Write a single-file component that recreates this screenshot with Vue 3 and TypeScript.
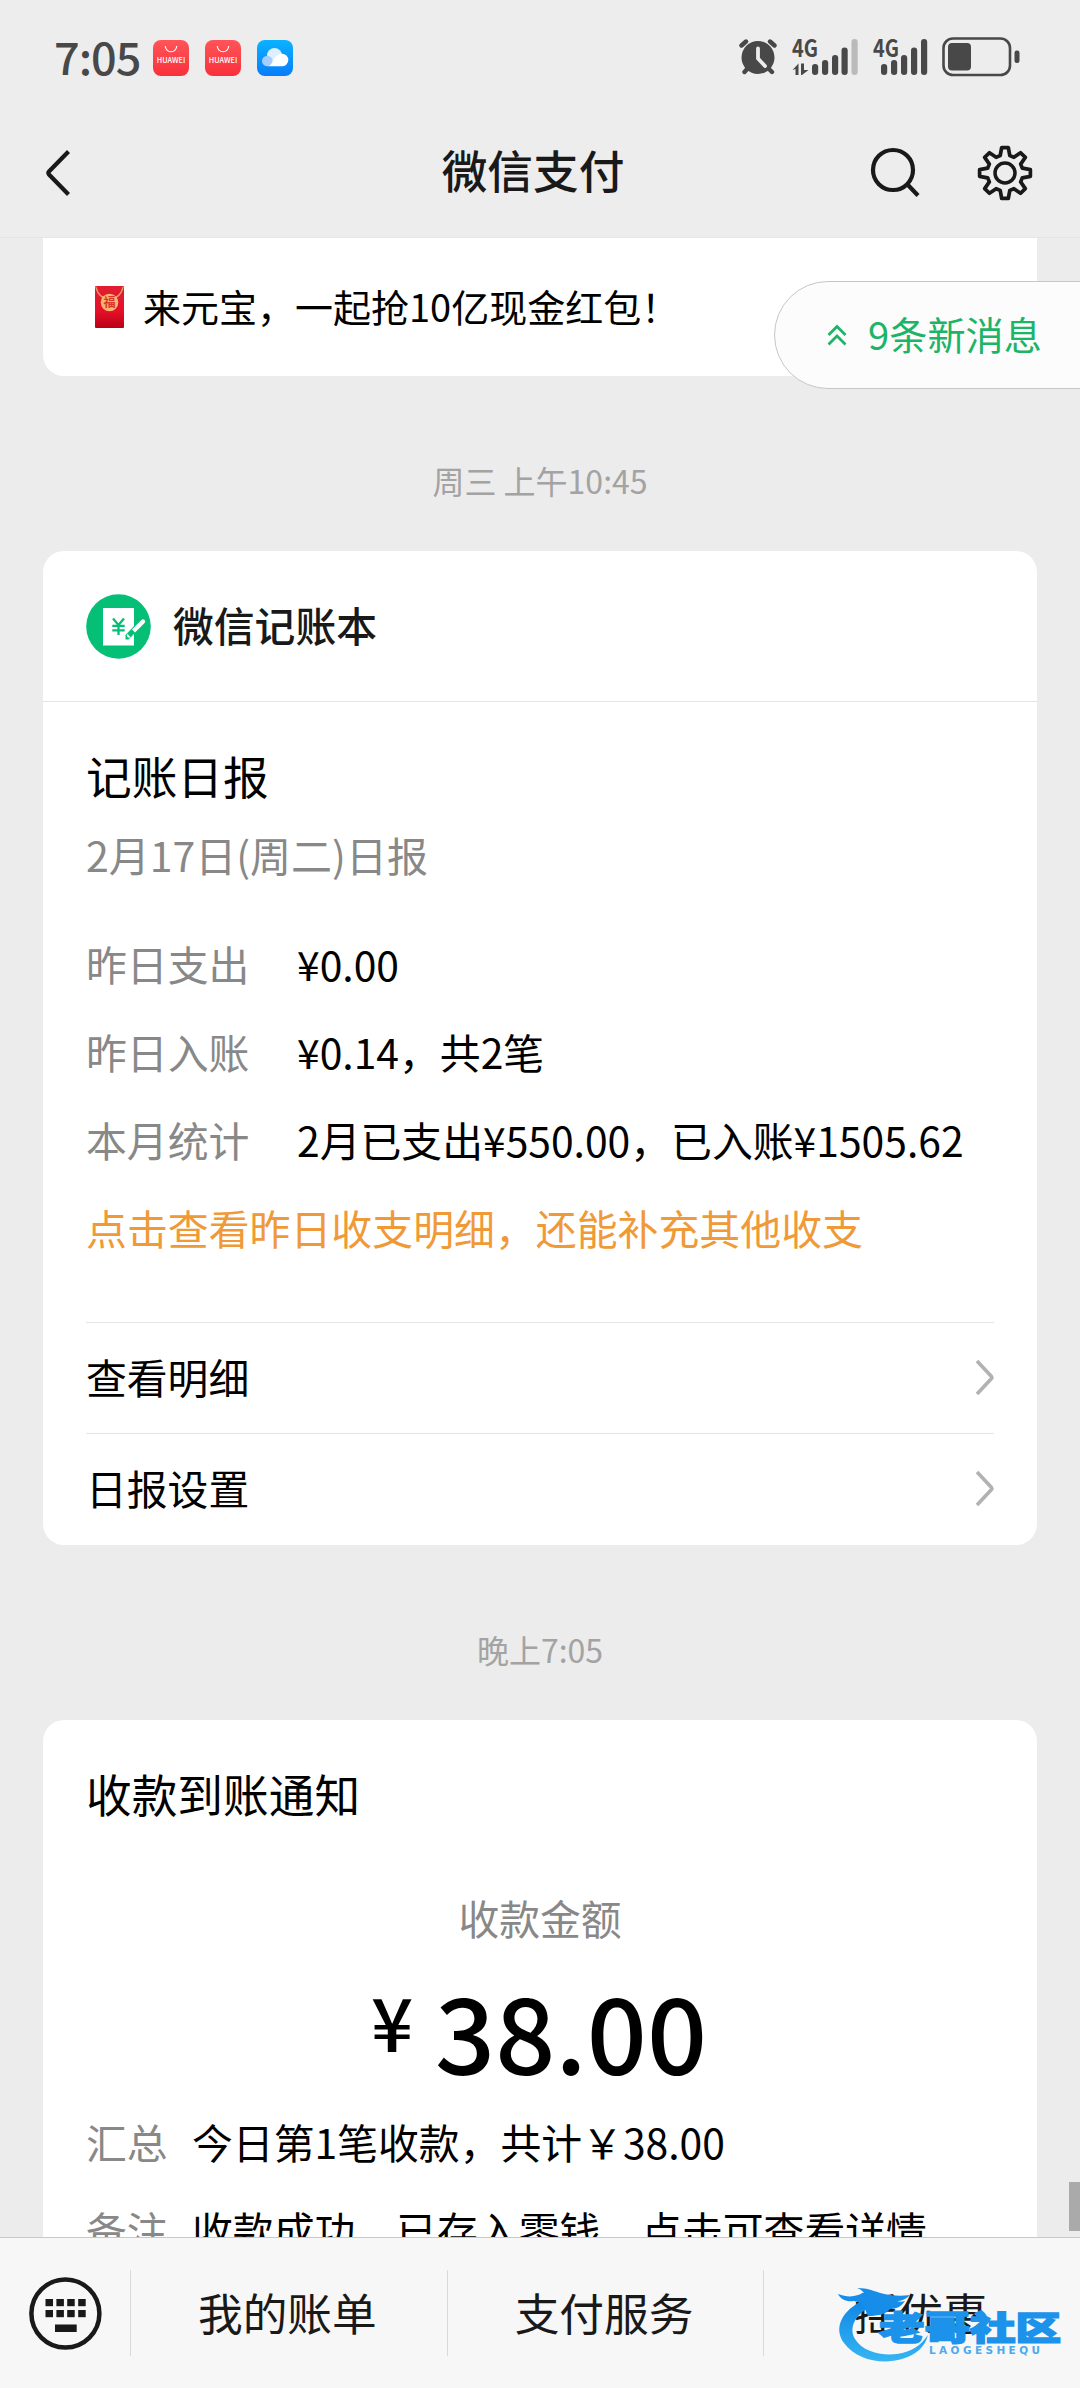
<script setup lang="ts">
interface SignalBar { x: number; top: number; dim?: boolean }
interface InfoRow { label: string; value: string }

const notifications = ['store', 'store', 'cloud']

const simOne: SignalBar[] = [
  { x: 20, top: 26 },
  { x: 30, top: 22 },
  { x: 40, top: 17 },
  { x: 49.5, top: 9.5 },
  { x: 59.5, top: 1, dim: true },
]
const simTwo: SignalBar[] = [
  { x: 8, top: 26 },
  { x: 18, top: 22 },
  { x: 28, top: 17 },
  { x: 38, top: 9.5 },
  { x: 48, top: 1 },
]

const reportRows: InfoRow[] = [
  { label: '昨日支出', value: '¥0.00' },
  { label: '昨日入账', value: '¥0.14，共2笔' },
  { label: '本月统计', value: '2月已支出¥550.00，已入账¥1505.62' },
]
const reportLinks = ['查看明细', '日报设置']

const receiptRows: InfoRow[] = [
  { label: '汇总', value: '今日第1笔收款，共计￥38.00' },
  { label: '备注', value: '收款成功，已存入零钱，点击可查看详情' },
]

const menus = ['我的账单', '支付服务', '摇优惠']
const keyColumns = [45.5, 56.4, 67.2, 78.2]

// Outline of the eight-toothed settings cog, centred on the origin.
const cog = (() => {
  const points: string[] = []
  for (let i = 0; i < 8; i++) {
    const base = i * 45
    const corners: [number, number][] = [[-15.5, 18], [-7.5, 25.6], [7.5, 25.6], [15.5, 18]]
    for (const [offset, radius] of corners) {
      const a = ((base + offset) * Math.PI) / 180
      points.push(`${(radius * Math.sin(a)).toFixed(2)},${(-radius * Math.cos(a)).toFixed(2)}`)
    }
  }
  return points.join(' ')
})()
</script>

<template>
  <div class="screen">
    <header class="top">
      <div class="status">
        <div class="status-left">
          <span class="clock">7:05</span>
          <template v-for="(kind, i) in notifications" :key="i">
            <svg v-if="kind === 'store'" class="app-icon" viewBox="0 0 36 36">
              <defs>
                <linearGradient id="store" x1="0" y1="0" x2="0" y2="1">
                  <stop offset="0" stop-color="#ff5558" />
                  <stop offset="1" stop-color="#f8303c" />
                </linearGradient>
              </defs>
              <rect width="36" height="36" rx="8" fill="url(#store)" />
              <path d="M12.3 6a5.7 5.7 0 0 0 11.4 0" fill="none" stroke="#fff" stroke-width="1.1" />
              <text x="18" y="23" font-size="7" font-weight="500" text-anchor="middle" textLength="28.5" lengthAdjust="spacingAndGlyphs" fill="#fff" class="brand">HUAWEI</text>
            </svg>
            <svg v-else class="app-icon" viewBox="0 0 36 36">
              <defs>
                <linearGradient id="sky" x1="0" y1="0" x2="0" y2="1">
                  <stop offset="0" stop-color="#0bb2ff" />
                  <stop offset="1" stop-color="#087cfb" />
                </linearGradient>
              </defs>
              <rect width="36" height="36" rx="8" fill="url(#sky)" />
              <circle cx="17.5" cy="15.5" r="7.5" fill="#dcf0ff" />
              <circle cx="10.3" cy="21" r="5.3" fill="#a6cdfb" />
              <path d="M10 26.3C17 26 16 13.500 25 13.700a6.300 6.300 0 0 1 0 12.600Z" fill="#fff" />
            </svg>
          </template>
        </div>
        <div class="status-right">
          <svg class="alarm" viewBox="0 0 38 38">
            <g stroke="#484848" stroke-width="4.400" stroke-linecap="round">
              <path d="M2.500 7.500 7 3.500M31 3.500l4.500 4M9 30l-3.500 4M29 30l4 4" />
            </g>
            <circle cx="19" cy="19.500" r="16.500" fill="#484848" />
            <path d="M19 10.500v10l7 7.500" fill="none" stroke="#ececec" stroke-width="3.800" stroke-linecap="round" stroke-linejoin="round" />
          </svg>
          <svg class="sim" width="67" height="38" viewBox="0 0 67 38">
            <text x="0" y="19" font-size="24" font-weight="700" textLength="26" lengthAdjust="spacingAndGlyphs" fill="#484848" class="brand">4G</text>
            <path d="M0.500 32 6.500 25.500V37H3.500V31ZM9 25.500h3V32h4.500L10 37H9Z" fill="#484848" />
            <rect v-for="b in simOne" :key="b.x" :x="b.x" :y="b.top" width="6.200" :height="37 - b.top" rx="3" :fill="b.dim ? '#bababa' : '#484848'" />
          </svg>
          <svg class="sim" width="55" height="38" viewBox="0 0 55 38">
            <text x="0" y="19" font-size="24" font-weight="700" textLength="26" lengthAdjust="spacingAndGlyphs" fill="#484848" class="brand">4G</text>
            <rect v-for="b in simTwo" :key="b.x" :x="b.x" :y="b.top" width="6.200" :height="37 - b.top" rx="3" fill="#484848" />
          </svg>
          <svg width="78" height="40" viewBox="0 0 78 40">
            <rect x="1.500" y="1.500" width="66.500" height="36.500" rx="9.500" fill="none" stroke="#484848" stroke-width="2.600" />
            <rect x="6" y="6" width="23" height="27.500" rx="4" fill="#484848" />
            <rect x="72.500" y="13.500" width="5" height="12.500" rx="2.200" fill="#484848" />
          </svg>
        </div>
      </div>
      <nav class="nav">
        <svg width="26" height="48" viewBox="0 0 26 48">
          <path d="M23.500 2.500 4 22.500q-1.300 1.500 0 3L23.500 45.500" fill="none" stroke="#191919" stroke-width="4.200" />
        </svg>
        <h1>微信支付</h1>
        <div class="nav-actions">
          <svg width="52" height="52" viewBox="0 0 52 52">
            <circle cx="24" cy="23" r="20" fill="none" stroke="#191919" stroke-width="4.200" />
            <path d="m38.500 37.500 10.500 11" stroke="#191919" stroke-width="4.200" />
          </svg>
          <svg width="56" height="56" viewBox="-28 -28 56 56">
            <polygon :points="cog" fill="none" stroke="#191919" stroke-width="3.700" stroke-linejoin="round" />
            <circle r="10" fill="none" stroke="#191919" stroke-width="3.500" />
          </svg>
        </div>
      </nav>
    </header>

    <main class="feed">
      <section class="card promo">
        <svg width="30" height="43" viewBox="0 0 30 43">
          <defs>
            <linearGradient id="red" x1="0" y1="0" x2="0" y2="1">
              <stop offset="0" stop-color="#e01f31" />
              <stop offset=".6" stop-color="#e60f2a" />
              <stop offset="1" stop-color="#b90014" />
            </linearGradient>
          </defs>
          <rect width="29" height="42" rx="1" fill="url(#red)" />
          <path d="M.8 1C3 9 8 13 14.500 13S26 9 28.200 1" fill="none" stroke="#e8a064" stroke-width="1.200" />
          <circle cx="14.500" cy="16.500" r="8.800" fill="#f7b56b" />
          <text x="14.500" y="21" font-size="12" font-weight="700" text-anchor="middle" fill="#d8352b">福</text>
        </svg>
        <span>来元宝，一起抢10亿现金红包！</span>
      </section>

      <time class="stamp">周三 上午10:45</time>

      <section class="card report">
        <div class="report-head">
          <svg width="65" height="65" viewBox="0 0 65 65">
            <circle cx="32.500" cy="32.500" r="32.300" fill="#06bf76" />
            <rect x="17" y="14" width="31" height="37.500" fill="#fff" />
            <path d="M39.500 45.500V41L48 32v7.500l-5.500 6Z" fill="#06bf76" />
            <path d="M43 41.500 57 27.500" stroke="#fff" stroke-width="4.400" stroke-linecap="round" />
            <path d="M43 41.500 47.500 37" stroke="#06bf76" stroke-width="4.600" />
            <path d="m27 24.500 5.500 6.500 5.500-6.500M32.500 31v10M26.300 31.800h12.400M26.300 36.300h12.400" fill="none" stroke="#06bf76" stroke-width="2.300" />
          </svg>
          <span>微信记账本</span>
        </div>
        <div class="report-body">
          <h2>记账日报</h2>
          <p class="sub">2月17日(周二)日报</p>
          <dl>
            <div v-for="row in reportRows" :key="row.label" class="row">
              <dt>{{ row.label }}</dt>
              <dd>{{ row.value }}</dd>
            </div>
          </dl>
          <p class="hint">点击查看昨日收支明细，还能补充其他收支</p>
          <div v-for="link in reportLinks" :key="link" class="link">
            <span>{{ link }}</span>
            <svg width="19" height="38" viewBox="0 0 19 38">
              <path d="M2 2 16.500 17.500q.8 1 0 2L2 35" fill="none" stroke="#b2b2b2" stroke-width="3.600" />
            </svg>
          </div>
        </div>
      </section>

      <time class="stamp">晚上7:05</time>

      <section class="card receipt">
        <h2>收款到账通知</h2>
        <p class="amount-label">收款金额</p>
        <p class="amount"><span class="yen">¥</span><span>38.00</span></p>
        <dl>
          <div v-for="row in receiptRows" :key="row.label" class="row short">
            <dt>{{ row.label }}</dt>
            <dd>{{ row.value }}</dd>
          </div>
        </dl>
      </section>

      <div class="unread">
        <svg width="20" height="22" viewBox="0 0 20 22">
          <path d="m1.500 11 8.500-8.500 8.500 8.500M1.500 20.500 10 12l8.500 8.500" fill="none" stroke="#1cb466" stroke-width="2.700" />
        </svg>
        <span>9条新消息</span>
      </div>
      <i class="scrollbar"></i>
    </main>

    <footer class="tabs">
      <div class="keyboard">
        <svg width="130" height="150" viewBox="0 0 130 150">
          <circle cx="65.400" cy="75.500" r="34" fill="none" stroke="#191919" stroke-width="4.500" />
          <template v-for="x in keyColumns" :key="x">
            <rect :x="x" y="61" width="7.500" height="7.200" fill="#191919" />
            <rect :x="x" y="72" width="7.500" height="7.200" fill="#191919" />
          </template>
          <rect x="55" y="86.500" width="21.700" height="7.500" fill="#191919" />
        </svg>
      </div>
      <div v-for="menu in menus" :key="menu" class="tab"><span>{{ menu }}</span></div>
      <svg class="watermark" width="228" height="88" viewBox="0 0 228 88">
        <defs>
          <linearGradient id="mark" x1="0" y1="0" x2="0" y2="1">
            <stop offset="0" stop-color="#0f86e4" />
            <stop offset="1" stop-color="#36b5f3" />
          </linearGradient>
        </defs>
        <path d="M26 20C4 30-5 48 6 63c12 17 38 22 58 16 14-4 23-12 26-24-7 10-16 17-31 19-17 2-35-3-42-15C10 47 18 33 36 25Z" fill="url(#mark)" />
        <path d="M0 14c8 3 14 3 20 1l6-2c-2-2-3-4-7-5 7 0 12 1 17 3 9 3 20 6 36 4-4 4-8 6-13 6 3 1 5 1 8 0-4 6-9 8-15 8-4 5-11 7-22 7l-4-9c-3-4-6-5-10-6-7 1-13-1-16-7Z" fill="#168ee9" />
        <text x="41" y="60" font-size="33" font-weight="900" textLength="182" lengthAdjust="spacingAndGlyphs" fill="#1c92ea" stroke="#1c92ea" stroke-width="1.600">老哥社区</text>
        <text x="91" y="73.500" font-size="10.500" textLength="111" class="latin">LAOGESHEQU</text>
      </svg>
    </footer>
  </div>
</template>

<style>
body {
  background: #ececec;
}
</style>

<style scoped>
.screen {
  width: 1080px;
  height: 2388px;
  display: flex;
  flex-direction: column;
  overflow: hidden;
  background: #ececec;
  color: #000;
  font-family: "Noto Sans CJK SC", sans-serif;
}
h1, h2, p, dl, dd, dt {
  margin: 0;
  font-weight: 400;
}
svg {
  display: block;
  flex: none;
  overflow: visible;
}
.brand {
  font-family: "Noto Sans CJK SC", sans-serif;
}
.latin {
  font-family: "DejaVu Sans", sans-serif;
  font-weight: 700;
  fill: #4dabeb;
}
.top {
  flex: none;
  height: 238px;
  box-sizing: border-box;
  background: #ededed;
  border-bottom: 1px solid #e5e5e5;
}
.status {
  height: 116px;
  display: flex;
  align-items: center;
  justify-content: space-between;
  padding: 0 60px 0 54px;
}
.status-left, .status-right {
  display: flex;
  align-items: center;
}
.status-right {
  padding-bottom: 2px;
}
.clock {
  width: 99px;
  padding-bottom: 4px;
  font-size: 45px;
  line-height: 56px;
  color: #484848;
  font-weight: 500;
  letter-spacing: -1px;
}
.app-icon {
  width: 36px;
  height: 36px;
  margin-right: 16px;
}
.alarm {
  width: 38px;
  height: 38px;
  margin-right: 15px;
}
.sim {
  margin-right: 14px;
}
.nav {
  height: 114px;
  display: grid;
  grid-template-columns: 1fr auto 1fr;
  align-items: center;
  padding: 0 47px 0 45px;
}
.nav h1 {
  margin-right: 12px;
  padding-bottom: 9px;
  font-size: 45.700px;
  font-weight: 500;
  line-height: 60px;
  color: #191919;
}
.nav-actions {
  display: flex;
  align-items: center;
  justify-content: flex-end;
  gap: 56px;
}
.feed {
  flex: 1;
  min-height: 0;
  position: relative;
  overflow: hidden;
}
.card {
  margin: 0 43px;
  border-radius: 21px;
  background: #fff;
}
.promo {
  height: 138px;
  box-sizing: border-box;
  padding: 0 52px;
  display: flex;
  align-items: center;
  gap: 18px;
  border-radius: 0 0 21px 21px;
  font-size: 38px;
  line-height: 56px;
}
.promo span {
  padding-bottom: 2px;
}
.stamp {
  display: block;
  height: 175px;
  line-height: 209px;
  text-align: center;
  font-size: 32px;
  color: #a3a3a3;
}
.report {
  height: 994px;
}
.report-head {
  height: 151px;
  box-sizing: border-box;
  border-bottom: 1px solid #e5e5e5;
  padding: 0 43px;
  display: flex;
  align-items: center;
  gap: 22px;
  font-size: 40.800px;
  line-height: 60px;
  font-weight: 500;
  color: #191919;
}
.report-head span {
  padding-bottom: 3px;
}
.report-body {
  padding: 36px 43px 0;
}
.report-body h2, .receipt h2 {
  font-size: 45.700px;
  line-height: 74px;
}
.sub {
  height: 108px;
  font-size: 41px;
  line-height: 85px;
  color: #888;
}
.row {
  display: flex;
  height: 88px;
  font-size: 40.850px;
  line-height: 88px;
  white-space: nowrap;
}
.row dt {
  width: 211px;
  color: #888;
}
.row.short dt {
  width: 106px;
}
.hint {
  height: 138px;
  font-size: 40.900px;
  line-height: 88px;
  color: #f09a37;
}
.link {
  height: 111px;
  box-sizing: border-box;
  border-top: 1px solid #e5e5e5;
  display: flex;
  align-items: center;
  justify-content: space-between;
  font-size: 40.800px;
}
.link span {
  line-height: 60px;
  margin-top: -2px;
}
.receipt {
  height: 600px;
  padding: 36px 43px 0;
}
.amount-label {
  margin-top: 51px;
  text-align: center;
  font-size: 40.800px;
  line-height: 74px;
  color: #888;
}
.amount {
  height: 143px;
  display: flex;
  justify-content: center;
  padding-right: 2px;
  font-size: 105.500px;
  line-height: 148px;
  font-weight: 500;
}
.amount .yen {
  margin-right: 22px;
  font-size: 74px;
  line-height: 129px;
}
.unread {
  position: absolute;
  top: 43px;
  right: -2px;
  width: 308px;
  height: 108px;
  box-sizing: border-box;
  padding-left: 52px;
  display: flex;
  align-items: center;
  gap: 21px;
  border: 1px solid #c6c6c6;
  border-radius: 54px 0 0 54px;
  background: #fcfcfc;
  color: #1cb466;
  font-size: 38.200px;
  line-height: 56px;
}
.unread span {
  padding-bottom: 3px;
}
.scrollbar {
  position: absolute;
  right: 0;
  bottom: 6px;
  width: 11px;
  height: 49px;
  background: #aaa;
}
.tabs {
  flex: none;
  position: relative;
  height: 151px;
  box-sizing: border-box;
  display: flex;
  border-top: 1px solid #c8c8c8;
  background: #f7f7f7;
}
.keyboard {
  width: 130px;
}
.tab {
  flex: 1;
  display: flex;
  align-items: center;
  justify-content: center;
  margin: 32px 0;
  border-left: 1px solid #dadada;
  font-size: 44.700px;
  line-height: 64px;
  color: #191919;
}
.tab span {
  padding: 0 3px 3px 0;
}
.watermark {
  position: absolute;
  left: 838px;
  top: 42px;
}
</style>
